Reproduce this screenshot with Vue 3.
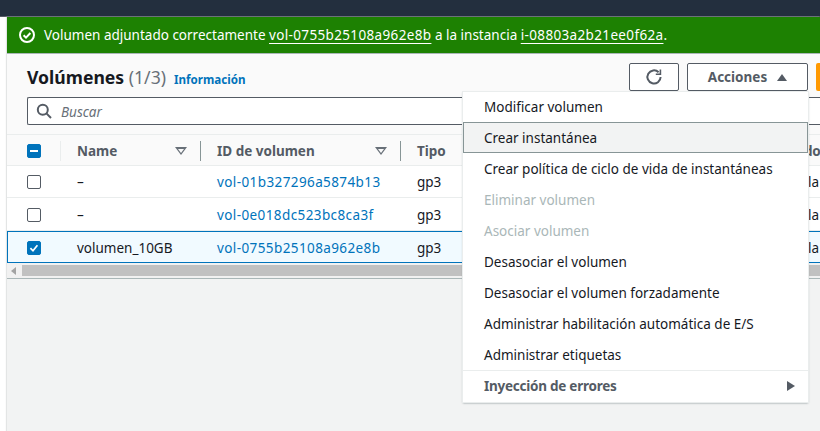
<script setup>
const rows = [
  { name: '–', id: 'vol-01b327296a5874b13', type: 'gp3', selected: false },
  { name: '–', id: 'vol-0e018dc523bc8ca3f', type: 'gp3', selected: false },
  { name: 'volumen_10GB', id: 'vol-0755b25108a962e8b', type: 'gp3', selected: true }
]

const actions = [
  { label: 'Modificar volumen' },
  { label: 'Crear instantánea', hover: true },
  { label: 'Crear política de ciclo de vida de instantáneas' },
  { label: 'Eliminar volumen', disabled: true },
  { label: 'Asociar volumen', disabled: true },
  { label: 'Desasociar el volumen' },
  { label: 'Desasociar el volumen forzadamente' },
  { label: 'Administrar habilitación automática de E/S' },
  { label: 'Administrar etiquetas' }
]
</script>

<template>
  <div class="page">
    <div class="topbar"></div>
    <div class="main">
      <div class="flash">
        <svg class="flash-icon" width="18" height="18" viewBox="0 0 18 18" fill="none" stroke="#fff" stroke-width="2">
          <circle cx="9" cy="9" r="7" />
          <path d="M5.6 9.2l2.4 2.4 4.4-4.6" />
        </svg>
        <span>Volumen adjuntado correctamente <u>vol-0755b25108a962e8b</u> a la instancia <u>i-08803a2b21ee0f62a</u>.</span>
      </div>

      <div class="panel-head">
        <div class="title-row">
          <h1>Volúmenes <span class="count">(1/3)</span></h1>
          <a class="info">Información</a>
          <div class="tools">
            <button class="btn refresh">
              <svg width="18" height="18" viewBox="0 0 18 18" fill="none" stroke="#545b64" stroke-width="2">
                <path d="M13.6 4.2A6.6 6.6 0 1 0 15.6 9" />
                <path d="M15.4 1.6v4.6h-4.6" stroke-width="1.6" />
              </svg>
            </button>
            <button class="btn actions">Acciones <span class="caret"></span></button>
            <span class="orange"></span>
          </div>
        </div>
        <div class="search">
          <svg width="16" height="16" viewBox="0 0 16 16" fill="none" stroke="#545b64" stroke-width="2">
            <circle cx="6.8" cy="6.8" r="5" />
            <path d="M10.4 10.4l4.6 4.6" />
          </svg>
          <span>Buscar</span>
        </div>
      </div>

      <div class="table">
        <div class="row head">
          <div class="c-check">
            <span class="box on"><span class="dash"></span></span>
            <i class="sep light"></i>
          </div>
          <div class="c-name">Name<span class="sort"></span><i class="sep"></i></div>
          <div class="c-id">ID de volumen<span class="sort"></span><i class="sep"></i></div>
          <div class="c-type">Tipo</div>
          <div class="c-more">do</div>
        </div>
        <div v-for="row in rows" :key="row.id" class="row" :class="{ selected: row.selected }">
          <div class="c-check">
            <span class="box" :class="{ on: row.selected }">
              <svg v-if="row.selected" width="14" height="14" viewBox="0 0 14 14" fill="none" stroke="#fff" stroke-width="2">
                <path d="M2.8 7.2l3 3 5.2-6.4" />
              </svg>
            </span>
          </div>
          <div class="c-name">{{ row.name }}</div>
          <div class="c-id link">{{ row.id }}</div>
          <div class="c-type">{{ row.type }}</div>
          <div class="c-more">la</div>
        </div>
        <div class="scrollbar">
          <span class="arrow"></span>
          <span class="thumb"></span>
        </div>
      </div>

      <div class="menu">
        <div
          v-for="item in actions"
          :key="item.label"
          class="menu-item"
          :class="{ hover: item.hover, disabled: item.disabled }"
        >{{ item.label }}</div>
        <div class="menu-group">
          Inyección de errores
          <span class="group-arrow"></span>
        </div>
      </div>
    </div>
  </div>
</template>

<style>
html, body {
  margin: 0;
  overflow: hidden;
  background: #fff;
}
</style>

<style scoped>
.page {
  width: 820px;
  height: 431px;
  overflow: hidden;
  font-family: "Noto Sans", "Open Sans", sans-serif;
  font-size: 13.5px;
  color: #16191f;
}
.topbar {
  height: 16px;
  background: #232f3e;
  border-bottom: 1px solid #545b64;
}
.main {
  position: relative;
  margin-left: 7px;
  height: 414px;
  background: #f2f3f3;
  box-shadow: -1px 0 1px #e3e5e5;
}
.flash {
  height: 36px;
  background: #1d8102;
  color: #fff;
  display: flex;
  align-items: center;
  gap: 8px;
  padding-left: 11px;
  border-bottom: 1px solid #aab7b8;
  white-space: nowrap;
}
.flash u {
  letter-spacing: 0.35px;
  text-underline-offset: 3px;
  text-decoration-thickness: 1px;
}
.flash-icon {
  flex-shrink: 0;
}
.panel-head {
  background: #fafafa;
  height: 81px;
  padding: 9px 0 0 20px;
  box-sizing: border-box;
  border-bottom: 1px solid #eaeded;
}
.title-row {
  display: flex;
  align-items: center;
  height: 29px;
}
h1 {
  margin: 0;
  font-size: 17.6px;
  font-weight: 700;
  line-height: 29px;
}
.count {
  font-weight: 400;
  color: #687078;
}
.info {
  margin-left: 8px;
  margin-top: 3px;
  font-size: 11.6px;
  font-weight: 700;
  color: #0073bb;
}
.tools {
  margin-left: auto;
  display: flex;
  gap: 8px;
  width: 191px;
  height: 28px;
  align-self: flex-start;
  flex-shrink: 0;
}
.btn {
  height: 28px;
  box-sizing: border-box;
  background: #fff;
  border: 1px solid #545b64;
  border-radius: 2px;
  color: #545b64;
  font: 700 13.5px "Noto Sans", sans-serif;
  display: flex;
  align-items: center;
  justify-content: center;
  padding: 0;
  flex-shrink: 0;
}
.refresh {
  width: 50px;
}
.actions {
  width: 121px;
  gap: 10px;
}
.caret {
  width: 0;
  height: 0;
  border-left: 5.5px solid transparent;
  border-right: 5.5px solid transparent;
  border-bottom: 7px solid #545b64;
}
.orange {
  width: 20px;
  height: 28px;
  flex-shrink: 0;
  background: #ff9900;
  border-radius: 2px;
}
.search {
  margin-top: 5px;
  height: 28px;
  box-sizing: border-box;
  background: #fff;
  border: 1px solid #545b64;
  border-right: 0;
  border-radius: 2px 0 0 2px;
  display: flex;
  align-items: center;
  gap: 9px;
  padding-left: 8px;
  color: #687078;
  font-style: italic;
}
.search span {
  padding-top: 2px;
}
.table {
  background: #fff;
  overflow: hidden;
}
.row {
  display: grid;
  grid-template-columns: 54px 140px 200px 388px 31px;
  width: 830px;
  height: 32px;
  padding-top: 1px;
  align-items: center;
  box-sizing: border-box;
  border-bottom: 1px solid #eaeded;
  position: relative;
  white-space: nowrap;
}
.row:nth-child(3) {
  height: 33px;
}
.row > div {
  position: relative;
  height: 100%;
  display: flex;
  align-items: center;
}
.head {
  height: 31px;
  background: #fafafa;
  font-weight: 700;
  color: #545b64;
}
.selected {
  background: #f1faff;
  border-bottom: 0;
  box-shadow: inset 0 0 0 1px #0073bb;
}
.c-check {
  padding-left: 20px;
}
.c-name,
.c-id,
.c-type {
  padding-left: 16px;
}
.c-more {
  padding-left: 19px;
}
.head .c-more {
  padding-left: 15px;
  letter-spacing: -0.4px;
}
.link {
  color: #0073bb;
  letter-spacing: 0.4px;
}
.box {
  width: 14px;
  height: 14px;
  box-sizing: border-box;
  border: 1px solid #545b64;
  border-radius: 2px;
  background: #fff;
  display: flex;
  align-items: center;
  justify-content: center;
}
.box.on {
  background: #0073bb;
  border-color: #0073bb;
}
.dash {
  width: 8px;
  height: 2px;
  background: #fff;
}
.sep {
  position: absolute;
  right: 0;
  top: 5px;
  width: 1px;
  height: 20px;
  background: #879596;
}
.sep.light {
  background: #eaeded;
}
.sort {
  position: absolute;
  right: 14px;
  top: 11px;
  width: 0;
  height: 0;
  border-left: 6px solid transparent;
  border-right: 6px solid transparent;
  border-top: 8px solid #687078;
}
.sort::after {
  content: "";
  position: absolute;
  left: -3px;
  top: -6px;
  border-left: 3px solid transparent;
  border-right: 3px solid transparent;
  border-top: 4px solid #fafafa;
}
.scrollbar {
  height: 15px;
  background: #f1f1f1;
  display: flex;
  align-items: center;
  border-bottom: 1px solid #aab7b8;
}
.arrow {
  width: 0;
  height: 0;
  margin-left: 4px;
  border-top: 4px solid transparent;
  border-bottom: 4px solid transparent;
  border-right: 5px solid #a3a3a3;
}
.thumb {
  flex: 1;
  height: 11px;
  margin-left: 6px;
  background: #c1c1c1;
}
.menu {
  position: absolute;
  left: 456px;
  top: 75px;
  width: 345px;
  background: #fff;
  box-shadow: 0 0 0 1px #eaeded, 0 1px 2px rgba(0, 28, 36, 0.5);
}
.menu-item {
  height: 31px;
  line-height: 31px;
  box-sizing: border-box;
  padding-left: 20px;
  border: 1px solid transparent;
}
.menu-item:first-child {
  margin-top: -1px;
}
.menu-item.hover {
  background: #f2f3f3;
  border-color: #879596;
}
.menu-item.disabled {
  color: #aab7b8;
}
.menu-group {
  height: 32px;
  line-height: 31px;
  box-sizing: border-box;
  padding-left: 21px;
  border-top: 1px solid #eaeded;
  font-weight: 700;
  color: #545b64;
  letter-spacing: -0.25px;
  position: relative;
}
.group-arrow {
  position: absolute;
  right: 13px;
  top: 10px;
  width: 0;
  height: 0;
  border-top: 5px solid transparent;
  border-bottom: 5px solid transparent;
  border-left: 8px solid #545b64;
}
</style>
